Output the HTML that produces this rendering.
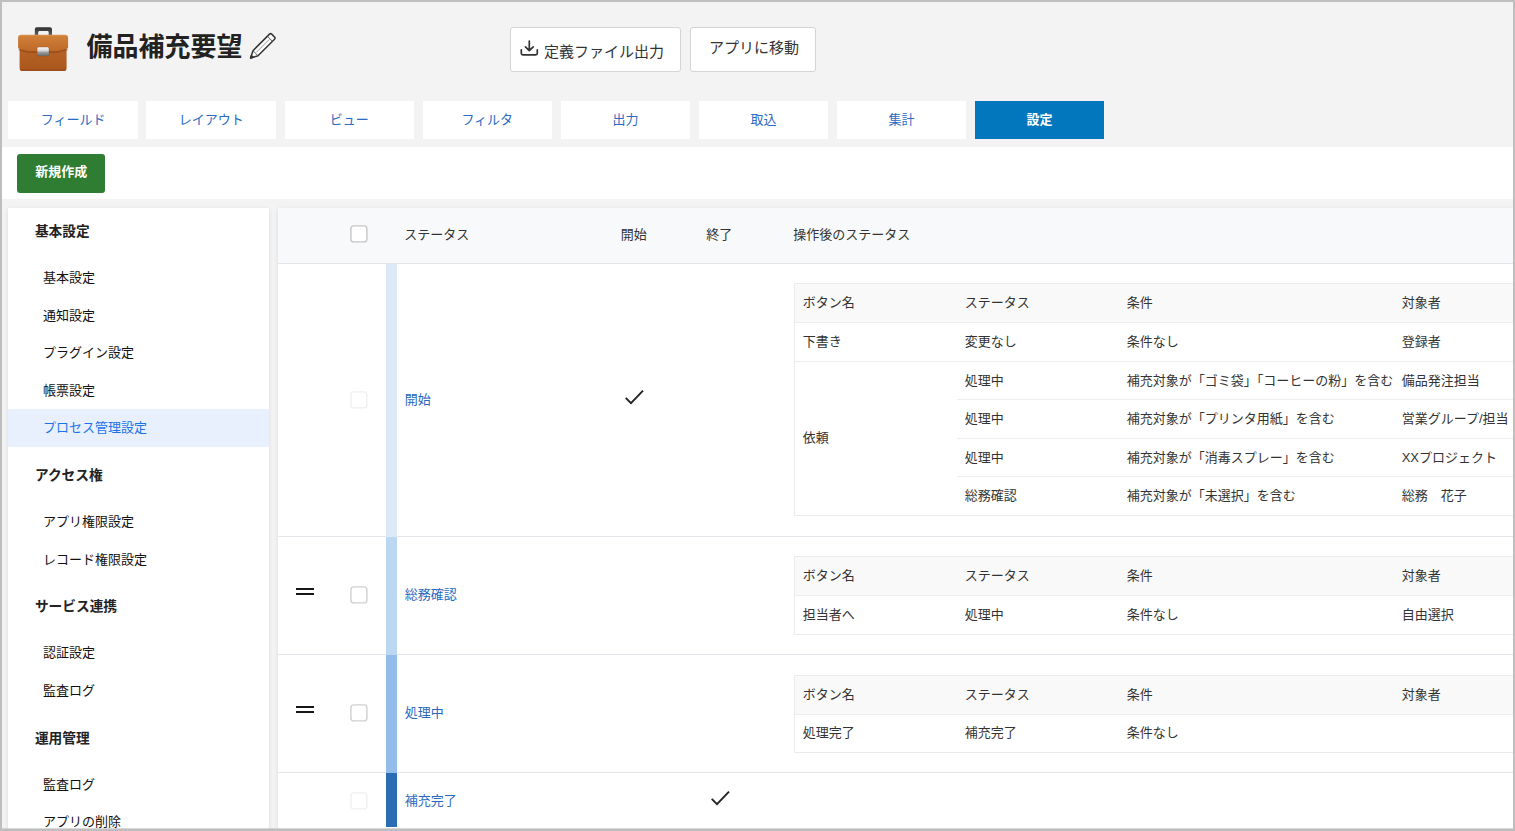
<!DOCTYPE html>
<html lang="ja"><head><meta charset="utf-8"><title>備品補充要望 - プロセス管理設定</title>
<style>
html,body{margin:0;padding:0}
body{width:1515px;height:831px;overflow:hidden;background:#f3f3f3;font-family:"Liberation Sans","Noto Sans CJK JP",sans-serif;position:relative}
.abs{position:absolute}
.t{position:absolute;margin:0;font-weight:normal;display:block;color:#111;white-space:nowrap;overflow:visible;line-height:1;text-decoration:none}
.t.b{font-weight:bold}
.k2{color:#222}.k3{color:#333}.kw{color:#fff}.kb{color:#2a6ac2}.ks{color:#1a73e8}.kl{color:#2868c0}.c3{color:#111}
.fr{position:absolute;background:#bebebe;z-index:50}
.btn{position:absolute;background:#fff;border:1px solid #d4d4d4;border-radius:3px;box-sizing:border-box}
.tab{position:absolute;top:101px;width:129.6px;height:37.5px;background:#fff}
.tab.act{background:#0277bd}
.bar{position:absolute;left:0;top:147px;width:1515px;height:52px;background:#fff}
.new{position:absolute;left:17px;top:154px;width:88px;height:38.5px;background:#2e7d32;border-radius:3px}
.side{position:absolute;left:8px;top:208px;width:261px;height:640px;background:#fff;box-shadow:0 1px 4px rgba(0,0,0,.10)}
.sel{position:absolute;left:8px;top:409px;width:261px;height:38px;background:#e8f0fe}
.main{position:absolute;left:277.5px;top:208px;width:1240px;height:640px;background:#fff;box-shadow:0 1px 4px rgba(0,0,0,.10)}
.mh{position:absolute;left:277.5px;top:208px;width:1240px;height:55px;background:#f8f9fb;border-bottom:1px solid #e2e5e9}
.hl{position:absolute;left:277.5px;width:1240px;height:1px;background:#e2e5e9}
.cbar{position:absolute;left:386px;width:10.7px}
.cb{position:absolute;width:17.4px;height:17.4px;box-sizing:border-box;border:1.3px solid #c4c4c4;border-radius:3.5px;background:#fff}
.cb.dis{border-color:#efefef}
.hd{position:absolute;left:296px;width:18px;height:2.2px;border-top:2.2px solid #161616;border-bottom:2.2px solid #161616;box-sizing:content-box;height:2.9px}
.it{position:absolute;left:794px;width:760px;box-sizing:border-box;border:1px solid #ebebeb;background:#fff}
.ith{background:#f9f9f9}
.il{position:absolute;width:760px;height:1px;background:#eeeeee}
</style></head>
<body>
<header><svg class="abs" style="left:15px;top:24px" width="58" height="52" viewBox="15 24 58 52">
<defs>
<linearGradient id="gb" x1="0" y1="0" x2="0" y2="1"><stop offset="0" stop-color="#bb672a"/><stop offset=".9" stop-color="#ad591e"/><stop offset="1" stop-color="#97491a"/></linearGradient>
<linearGradient id="gf" x1="0" y1="0" x2="0" y2="1"><stop offset="0" stop-color="#dd9150"/><stop offset=".12" stop-color="#cf7e38"/><stop offset="1" stop-color="#be6a29"/></linearGradient>
<linearGradient id="gc" x1="0" y1="0" x2="0" y2="1"><stop offset="0" stop-color="#fbfbfb"/><stop offset=".42" stop-color="#d4d4d4"/><stop offset=".58" stop-color="#9c9c9c"/><stop offset="1" stop-color="#6a6a6a"/></linearGradient>
<linearGradient id="gh" x1="0" y1="0" x2="0" y2="1"><stop offset="0" stop-color="#2f2f2f"/><stop offset="1" stop-color="#5c5c5c"/></linearGradient>
</defs>
<path d="M34.8 35V29.3q0-2.1 2.1-2.1H49.9q2.1 0 2.1 2.1V35H48.7V32.4q0-1.4-1.4-1.4H39.6q-1.4 0-1.4 1.4V35Z" fill="url(#gh)"/>
<rect x="19.6" y="40" width="47" height="31.1" rx="3.2" fill="url(#gb)"/>
<path d="M18.6 49.6C23 50.2 26 51.8 30.5 52.2H55.7C60 51.8 63 50.2 67.6 49.6" fill="none" stroke="#6e340c" stroke-opacity=".36" stroke-width="1.8"/>
<path d="M18.1 38q0-3.2 3.2-3.2H64.9q3.2 0 3.2 3.2V47.6q0 1-1 1.1C63 49.3 60 50.7 55.7 51H30.5C26 50.7 23 49.3 19.1 48.7q-1-.1-1-1.1Z" fill="url(#gf)"/>
<rect x="37.1" y="47.1" width="11.9" height="9" rx="1.6" fill="url(#gc)" stroke="#7b4a26" stroke-opacity=".45" stroke-width=".7"/>
</svg><h1 class="t b k2" style="left:86.4px;top:33.9px;width:156px;height:26px;font-size:26px;">備品補充要望</h1>
<svg class="abs" style="left:246px;top:29px" width="36" height="36" viewBox="246 29 36 36">
<g transform="translate(250.4 58.3) rotate(-45)" fill="none" stroke="#333" stroke-width="1.5" stroke-linejoin="round">
<path d="M0.3 0L7.2-3.55H30.6q1.5 0 1.5 1.5V2.05q0 1.5-1.5 1.5H7.2Z" fill="#fcfcfc"/>
<path d="M7.2-3.55V3.55M27.6-3.55V3.55" stroke="#555" stroke-width=".9"/>
<path d="M8.5 0H26.8" stroke="#888" stroke-width=".8"/>
<path d="M0.3 0L2.6-1.2V1.2Z" fill="#333"/>
</g></svg><div class="btn" style="left:510px;top:27px;width:171px;height:45px"></div><div class="btn" style="left:690px;top:27px;width:126px;height:45px"></div><svg class="abs" style="left:518px;top:38px" width="22" height="20" viewBox="518 38 22 20">
<g fill="none" stroke="#333" stroke-width="1.7" stroke-linecap="round" stroke-linejoin="round">
<path d="M529.3 41V50.6M525.4 46.8L529.3 50.7 533.2 46.8"/>
<path d="M521.3 49.8V53.3q0 1.5 1.5 1.5h13q1.5 0 1.5-1.5V49.8"/>
</g></svg><div class="t k3" style="left:544.1px;top:43.5px;width:120px;height:15px;font-size:15px;">定義ファイル出力</div>
<div class="t k3" style="left:708.9px;top:40.1px;width:90px;height:15px;font-size:15px;">アプリに移動</div>
</header><nav><div class="tab" style="left:8.40px"></div><a class="t kb" style="left:40.7px;top:112.8px;width:65px;height:13px;font-size:13px;">フィールド</a>
<div class="tab" style="left:146.46px"></div><a class="t kb" style="left:178.76px;top:112.8px;width:65px;height:13px;font-size:13px;">レイアウト</a>
<div class="tab" style="left:284.52px"></div><a class="t kb" style="left:329.82px;top:112.8px;width:39px;height:13px;font-size:13px;">ビュー</a>
<div class="tab" style="left:422.58px"></div><a class="t kb" style="left:461.38px;top:112.8px;width:52px;height:13px;font-size:13px;">フィルタ</a>
<div class="tab" style="left:560.64px"></div><a class="t kb" style="left:612.44px;top:112.8px;width:26px;height:13px;font-size:13px;">出力</a>
<div class="tab" style="left:698.70px"></div><a class="t kb" style="left:750.5px;top:112.8px;width:26px;height:13px;font-size:13px;">取込</a>
<div class="tab" style="left:836.76px"></div><a class="t kb" style="left:888.56px;top:112.8px;width:26px;height:13px;font-size:13px;">集計</a>
<div class="tab act" style="left:974.82px"></div><a class="t b kw" style="left:1026.62px;top:112.8px;width:26px;height:13px;font-size:13px;">設定</a>
</nav><div class="bar"></div><div class="new"></div><div class="t b kw" style="left:35.2px;top:165.3px;width:52px;height:13px;font-size:13px;">新規作成</div>
<aside><div class="side"></div><div class="sel"></div><h2 class="t b k2" style="left:34.9px;top:225.15px;width:54.8px;height:13.7px;font-size:13.7px;">基本設定</h2>
<h2 class="t b k2" style="left:34.9px;top:468.85px;width:68.5px;height:13.7px;font-size:13.7px;">アクセス権</h2>
<h2 class="t b k2" style="left:34.9px;top:600.45px;width:82.2px;height:13.7px;font-size:13.7px;">サービス連携</h2>
<h2 class="t b k2" style="left:34.9px;top:732.15px;width:54.8px;height:13.7px;font-size:13.7px;">運用管理</h2>
<div class="t c3" style="left:42.9px;top:271.2px;width:52px;height:13px;font-size:13px;">基本設定</div>
<div class="t c3" style="left:42.9px;top:308.8px;width:52px;height:13px;font-size:13px;">通知設定</div>
<div class="t c3" style="left:42.9px;top:346.4px;width:91px;height:13px;font-size:13px;">プラグイン設定</div>
<div class="t c3" style="left:42.9px;top:383.9px;width:52px;height:13px;font-size:13px;">帳票設定</div>
<div class="t ks" style="left:42.9px;top:421px;width:104px;height:13px;font-size:13px;">プロセス管理設定</div>
<div class="t c3" style="left:42.9px;top:515px;width:91px;height:13px;font-size:13px;">アプリ権限設定</div>
<div class="t c3" style="left:42.9px;top:552.6px;width:104px;height:13px;font-size:13px;">レコード権限設定</div>
<div class="t c3" style="left:42.9px;top:646.4px;width:52px;height:13px;font-size:13px;">認証設定</div>
<div class="t c3" style="left:42.9px;top:684px;width:52px;height:13px;font-size:13px;">監査ログ</div>
<div class="t c3" style="left:42.9px;top:777.8px;width:52px;height:13px;font-size:13px;">監査ログ</div>
<div class="t c3" style="left:42.9px;top:815.4px;width:78px;height:13px;font-size:13px;">アプリの削除</div>
</aside><main><div class="main"></div><div class="mh"></div><div class="hl" style="top:536px"></div><div class="hl" style="top:654px"></div><div class="hl" style="top:772px"></div><div class="cbar" style="top:264px;height:273px;background:#dce9f7"></div><div class="cbar" style="top:537px;height:118px;background:#bcd7f1"></div><div class="cbar" style="top:655px;height:118px;background:#93bce8"></div><div class="cbar" style="top:773px;height:54px;background:#2a6db4"></div><svg class="abs" style="left:348px;top:222.8px" width="22" height="22" viewBox="0 0 22 22"><rect x="2.9" y="2.9" width="16" height="16" rx="3" fill="#fff" stroke="#c6c6c6" stroke-width="1.4"/></svg><div class="t k3" style="left:404.3px;top:227.8px;width:65px;height:13px;font-size:13px;">ステータス</div>
<div class="t k3" style="left:620.7px;top:227.8px;width:26px;height:13px;font-size:13px;">開始</div>
<div class="t k3" style="left:706.3px;top:227.8px;width:26px;height:13px;font-size:13px;">終了</div>
<div class="t k3" style="left:793.3px;top:227.8px;width:117px;height:13px;font-size:13px;">操作後のステータス</div>
<svg class="abs" style="left:348px;top:388.8px" width="22" height="22" viewBox="0 0 22 22"><rect x="2.9" y="2.9" width="16" height="16" rx="3" fill="#fff" stroke="#f0f0f0" stroke-width="1.4"/></svg><a class="t kl" style="left:404.8px;top:392.8px;width:26px;height:13px;font-size:13px;">開始</a>
<svg class="abs" style="left:348px;top:584px" width="22" height="22" viewBox="0 0 22 22"><rect x="2.9" y="2.9" width="16" height="16" rx="3" fill="#fff" stroke="#d0d0d0" stroke-width="1.4"/></svg><a class="t kl" style="left:404.8px;top:588px;width:52px;height:13px;font-size:13px;">総務確認</a>
<div class="hd" style="top:588px"></div><svg class="abs" style="left:348px;top:702.2px" width="22" height="22" viewBox="0 0 22 22"><rect x="2.9" y="2.9" width="16" height="16" rx="3" fill="#fff" stroke="#d0d0d0" stroke-width="1.4"/></svg><a class="t kl" style="left:404.8px;top:706.2px;width:39px;height:13px;font-size:13px;">処理中</a>
<div class="hd" style="top:706px"></div><svg class="abs" style="left:348px;top:790px" width="22" height="22" viewBox="0 0 22 22"><rect x="2.9" y="2.9" width="16" height="16" rx="3" fill="#fff" stroke="#f0f0f0" stroke-width="1.4"/></svg><a class="t kl" style="left:404.8px;top:794px;width:52px;height:13px;font-size:13px;">補充完了</a>
<svg class="abs" style="left:622px;top:386px" width="24" height="20" viewBox="0 0 24 20"><path d="M3.7 11.8L9 17.1 21 4.7" fill="none" stroke="#222" stroke-width="1.9"/></svg><svg class="abs" style="left:708px;top:786.6px" width="24" height="20" viewBox="0 0 24 20"><path d="M3.7 11.8L9 17.1 21 4.7" fill="none" stroke="#222" stroke-width="1.9"/></svg><div class="it" style="top:283px;height:233px"><div class="ith" style="height:38px"></div></div><div class="il" style="top:322px;left:795px"></div><div class="il" style="top:361px;left:795px"></div><div class="il" style="top:399px;left:957px"></div><div class="il" style="top:438px;left:957px"></div><div class="il" style="top:476px;left:957px"></div><div class="it" style="top:556px;height:79px"><div class="ith" style="height:38px"></div></div><div class="il" style="top:595px;left:795px"></div><div class="it" style="top:675px;height:78px"><div class="ith" style="height:38px"></div></div><div class="il" style="top:714px;left:795px"></div><div class="t k3" style="left:802.8px;top:296px;width:52px;height:13px;font-size:13px;">ボタン名</div>
<div class="t k3" style="left:964.7px;top:296px;width:65px;height:13px;font-size:13px;">ステータス</div>
<div class="t k3" style="left:1126.7px;top:296px;width:26px;height:13px;font-size:13px;">条件</div>
<div class="t k3" style="left:1401.7px;top:296px;width:39px;height:13px;font-size:13px;">対象者</div>
<div class="t k3" style="left:802.8px;top:335px;width:39px;height:13px;font-size:13px;">下書き</div>
<div class="t k3" style="left:964.7px;top:335px;width:52px;height:13px;font-size:13px;">変更なし</div>
<div class="t k3" style="left:1126.7px;top:335px;width:52px;height:13px;font-size:13px;">条件なし</div>
<div class="t k3" style="left:1401.7px;top:335px;width:39px;height:13px;font-size:13px;">登録者</div>
<div class="t k3" style="left:802.8px;top:431px;width:26px;height:13px;font-size:13px;">依頼</div>
<div class="t k3" style="left:964.7px;top:373.5px;width:39px;height:13px;font-size:13px;">処理中</div>
<div class="t k3" style="left:1126.7px;top:373.5px;width:273px;height:13px;font-size:13px;">補充対象が「ゴミ袋」「コーヒーの粉」を含む</div>
<div class="t k3" style="left:1401.7px;top:373.5px;width:78px;height:13px;font-size:13px;">備品発注担当</div>
<div class="t k3" style="left:964.7px;top:412.2px;width:39px;height:13px;font-size:13px;">処理中</div>
<div class="t k3" style="left:1126.7px;top:412.2px;width:208px;height:13px;font-size:13px;">補充対象が「プリンタ用紙」を含む</div>
<div class="t k3" style="left:1401.7px;top:412.2px;width:109.07px;height:13px;font-size:13px;">営業グループ/担当</div>
<div class="t k3" style="left:964.7px;top:450.5px;width:39px;height:13px;font-size:13px;">処理中</div>
<div class="t k3" style="left:1126.7px;top:450.5px;width:208px;height:13px;font-size:13px;">補充対象が「消毒スプレー」を含む</div>
<div class="t k3" style="left:1401.7px;top:450.5px;width:95.16px;height:13px;font-size:13px;">XXプロジェクト</div>
<div class="t k3" style="left:964.7px;top:489px;width:52px;height:13px;font-size:13px;">総務確認</div>
<div class="t k3" style="left:1126.7px;top:489px;width:169px;height:13px;font-size:13px;">補充対象が「未選択」を含む</div>
<div class="t k3" style="left:1401.7px;top:489px;width:65px;height:13px;font-size:13px;">総務　花子</div>
<div class="t k3" style="left:802.8px;top:569.3px;width:52px;height:13px;font-size:13px;">ボタン名</div>
<div class="t k3" style="left:964.7px;top:569.3px;width:65px;height:13px;font-size:13px;">ステータス</div>
<div class="t k3" style="left:1126.7px;top:569.3px;width:26px;height:13px;font-size:13px;">条件</div>
<div class="t k3" style="left:1401.7px;top:569.3px;width:39px;height:13px;font-size:13px;">対象者</div>
<div class="t k3" style="left:802.8px;top:608px;width:52px;height:13px;font-size:13px;">担当者へ</div>
<div class="t k3" style="left:964.7px;top:608px;width:39px;height:13px;font-size:13px;">処理中</div>
<div class="t k3" style="left:1126.7px;top:608px;width:52px;height:13px;font-size:13px;">条件なし</div>
<div class="t k3" style="left:1401.7px;top:608px;width:52px;height:13px;font-size:13px;">自由選択</div>
<div class="t k3" style="left:802.8px;top:687.5px;width:52px;height:13px;font-size:13px;">ボタン名</div>
<div class="t k3" style="left:964.7px;top:687.5px;width:65px;height:13px;font-size:13px;">ステータス</div>
<div class="t k3" style="left:1126.7px;top:687.5px;width:26px;height:13px;font-size:13px;">条件</div>
<div class="t k3" style="left:1401.7px;top:687.5px;width:39px;height:13px;font-size:13px;">対象者</div>
<div class="t k3" style="left:802.8px;top:725.8px;width:52px;height:13px;font-size:13px;">処理完了</div>
<div class="t k3" style="left:964.7px;top:725.8px;width:52px;height:13px;font-size:13px;">補充完了</div>
<div class="t k3" style="left:1126.7px;top:725.8px;width:52px;height:13px;font-size:13px;">条件なし</div>
</main>
<div class="fr" style="left:0;top:0;width:1515px;height:2px"></div><div class="fr" style="left:0;top:0;width:2px;height:831px"></div><div class="fr" style="left:1513px;top:0;width:2px;height:831px"></div><div class="fr" style="left:0;top:829px;width:1515px;height:2px"></div><div class="fr" style="left:0;top:828px;width:1515px;height:1px;opacity:.6"></div>
</body></html>
